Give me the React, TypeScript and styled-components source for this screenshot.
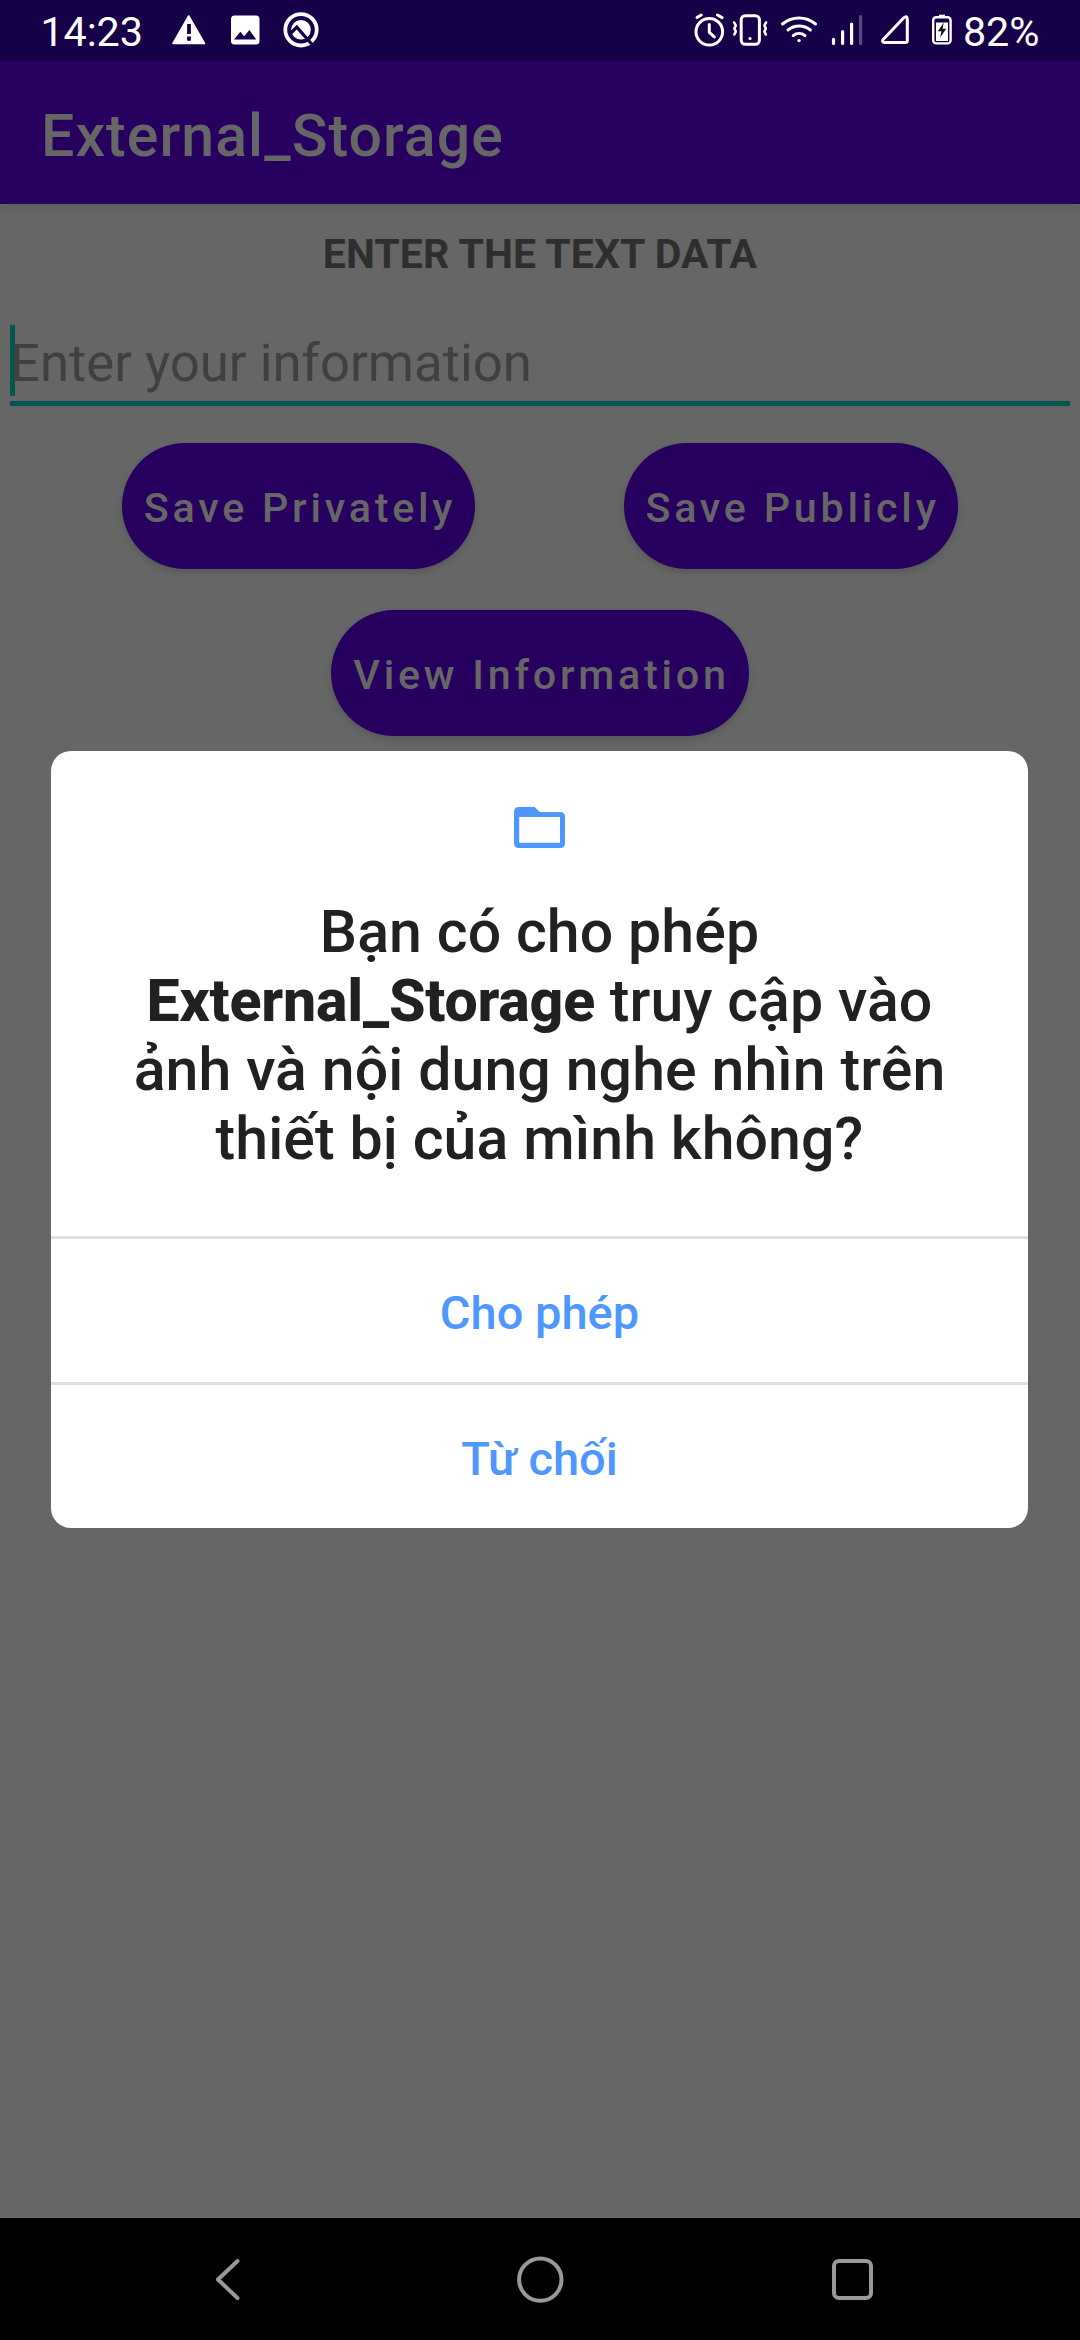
import React from "react";
import styled, { createGlobalStyle } from "styled-components";

const GlobalStyle = createGlobalStyle`
  *, *::before, *::after { box-sizing: border-box; }
  html, body { margin: 0; padding: 0; background: #666666; }
  body { font-family: Roboto, "Noto Sans", sans-serif; }
  button { font-family: inherit; border: 0; margin: 0; padding: 0; background: none; }
`;

const Screen = styled.div`
  position: relative;
  display: flex;
  flex-direction: column;
  width: 1080px;
  height: 2340px;
  overflow: hidden;
  background: #666666;
`;

const StatusBar = styled.header`
  flex: none;
  display: flex;
  justify-content: space-between;
  height: 61px;
  background: #160047;
  color: #ffffff;
`;

const StatusGroup = styled.div`
  display: flex;
  align-items: flex-start;
`;

const StatusText = styled.span<{ $width: number; $pad?: number }>`
  width: ${(p) => p.$width}px;
  padding-left: ${(p) => p.$pad ?? 0}px;
  font-size: 41.3px;
  line-height: 64px;
  letter-spacing: -0.1px;
  white-space: nowrap;
`;

const Glyph = styled.svg`
  display: block;
  flex: none;
  overflow: visible;
`;

const AppBar = styled.div`
  position: relative;
  flex: none;
  display: flex;
  align-items: center;
  height: 143px;
  padding: 6px 0 0 41px;
  background: #27005f;
  box-shadow: 0 2px 8px rgba(0, 0, 0, 0.12);
`;

const Title = styled.h1`
  margin: 0;
  font-size: 59px;
  font-weight: 500;
  line-height: 69px;
  letter-spacing: 1.05px;
  color: #666666;
`;

const Content = styled.main`
  flex: 1;
  display: flex;
  flex-direction: column;
  padding: 26px 10px 0;
`;

const Heading = styled.h2`
  margin: 0;
  text-align: center;
  font-size: 41px;
  font-weight: 700;
  line-height: 48px;
  letter-spacing: 0.08px;
  color: #2e2e2e;
`;

const Field = styled.div`
  display: flex;
  align-items: flex-start;
  height: 81px;
  margin-top: 47px;
  border-bottom: 5px solid #01574f;
`;

const Caret = styled.span`
  width: 5px;
  height: 71px;
  margin-right: -5px;
  background: #01574f;
`;

const Hint = styled.span`
  padding-top: 7px;
  font-size: 52.7px;
  line-height: 62px;
  color: #404040;
`;

const ButtonRow = styled.div<{ $top: number }>`
  display: flex;
  justify-content: center;
  gap: 149px;
  margin-top: ${(p) => p.$top}px;
`;

const PillButton = styled.button<{ $width: number }>`
  width: ${(p) => p.$width}px;
  height: 126px;
  padding: 4px 0 0 3px;
  border-radius: 63px;
  background: #27005f;
  color: #666666;
  font-size: 41.3px;
  font-weight: 500;
  letter-spacing: 3.75px;
  line-height: 48px;
  white-space: nowrap;
  box-shadow: 0 3px 7px rgba(0, 0, 0, 0.16);
`;

const Dialog = styled.section`
  position: absolute;
  top: 751px;
  left: 51px;
  width: 977px;
  height: 777px;
  display: flex;
  flex-direction: column;
  border-radius: 20px;
  background: #ffffff;
  overflow: hidden;
`;

const DialogBody = styled.div`
  display: flex;
  flex-direction: column;
  align-items: center;
  height: 485px;
  padding-top: 56px;
`;

const Question = styled.p`
  margin: 49px 0 0;
  text-align: center;
  font-size: 59px;
  font-weight: 500;
  line-height: 69px;
  letter-spacing: 0.1px;
  color: #212121;
`;

const AppName = styled.b`
  font-weight: 800;
  letter-spacing: -0.2px;
`;

const DialogAction = styled.button`
  height: 146px;
  padding-top: 5px;
  border-top: 3px solid #e0e0e0;
  color: #4d97ff;
  font-size: 47px;
  font-weight: 500;
  line-height: 56px;
`;

const NavBar = styled.nav`
  flex: none;
  display: flex;
  align-items: center;
  justify-content: space-between;
  height: 122px;
  padding: 0 204px;
  background: #000000;
`;

type IconProps = { x: number; w: number; children: React.ReactNode };

const StatusIcon = ({ x, w, children }: IconProps) => (
  <Glyph width={w} height={61} viewBox={`${x} 0 ${w} 61`} fill="none" stroke="#fff" strokeWidth={3} strokeLinecap="round" strokeLinejoin="round">
    {children}
  </Glyph>
);

const App = () => (
  <>
    <GlobalStyle />
    <Screen>
      <StatusBar>
        <StatusGroup>
          <StatusText $width={165} $pad={40.5}>14:23</StatusText>
          <StatusIcon x={165} w={55}>
            <path d="M188.7 16 204.5 43.5H173Z" fill="#fff" strokeWidth={1.6} />
            <path d="M189 24v10M189 36.5v4.3" stroke="#160047" strokeWidth={3.8} strokeLinecap="butt" />
          </StatusIcon>
          <StatusIcon x={220} w={50}>
            <rect x={231} y={15.5} width={28.5} height={29} rx={3.5} fill="#fff" stroke="none" />
            <path d="M234 39.6 240.3 31.8 244.2 36.3 249.4 30 256.3 39.6Z" fill="#160047" stroke="none" />
          </StatusIcon>
          <StatusIcon x={270} w={60}>
            <circle cx={301} cy={29.8} r={15.7} strokeWidth={3.8} />
            <circle cx={301} cy={29.8} r={9.8} fill="#fff" stroke="none" />
            <path d="M290.5 33.5 296.8 27.2 312.5 45" stroke="#160047" strokeWidth={3.2} strokeLinecap="butt" strokeLinejoin="miter" />
          </StatusIcon>
        </StatusGroup>
        <StatusGroup>
          <StatusIcon x={690} w={40}>
            <circle cx={709.3} cy={31.8} r={13.3} />
            <path d="M709.3 24.5v7.8l5 4.6M697 17.5l4.2-2.5M717.5 15l4.6 2.6" />
          </StatusIcon>
          <StatusIcon x={730} w={40}>
            <rect x={741.2} y={15.7} width={18.2} height={28.6} rx={4} />
            <circle cx={750} cy={38.5} r={1.6} fill="#fff" stroke="none" />
            <path d="M734.2 22.5l1.6 3-1.4 3 1.4 3-1.4 3 M766 22.5l-1.6 3 1.4 3-1.4 3 1.4 3" strokeWidth={2.6} />
          </StatusIcon>
          <StatusIcon x={770} w={55}>
            <path d="M782.5 24a25.5 25.5 0 0 1 33 0M788 30a17.5 17.5 0 0 1 22.4 0M793.2 35.6a9.6 9.6 0 0 1 11.8 0" />
            <circle cx={799} cy={40.6} r={1.7} fill="#fff" stroke="none" />
          </StatusIcon>
          <StatusIcon x={825} w={50}>
            <path d="M833.5 39.3v4.2M842.6 31.5v12M851.6 24v19.5" strokeWidth={3.2} />
            <path d="M860.6 16.5v27" stroke="#5a4a7c" strokeWidth={3.2} />
          </StatusIcon>
          <StatusIcon x={875} w={50}>
            <path d="M883.6 39 903.8 17.8Q907 15 907.3 19V40.5Q907.3 42.5 905.3 42.5H884.5Q881 42.2 883.6 39Z" />
          </StatusIcon>
          <StatusIcon x={925} w={37}>
            <rect x={933.2} y={17.2} width={17.4} height={26.2} rx={3} strokeWidth={2.4} />
            <path d="M939 16h6" strokeWidth={2.6} strokeLinecap="butt" />
            <rect x={936} y={22.5} width={12} height={18.5} fill="#fff" stroke="none" />
            <path d="M943.8 22.5 937.8 31.3h3.6l-1.2 6.3 6-8.8h-3.6Z" fill="#111" stroke="none" />
          </StatusIcon>
          <StatusText $width={118} $pad={1}>82%</StatusText>
        </StatusGroup>
      </StatusBar>
      <AppBar>
        <Title>External_Storage</Title>
      </AppBar>
      <Content>
        <Heading>ENTER THE TEXT DATA</Heading>
        <Field>
          <Caret />
          <Hint>Enter your information</Hint>
        </Field>
        <ButtonRow $top={37}>
          <PillButton $width={353}>Save Privately</PillButton>
          <PillButton $width={334}>Save Publicly</PillButton>
        </ButtonRow>
        <ButtonRow $top={41}>
          <PillButton $width={418}>View Information</PillButton>
        </ButtonRow>
      </Content>
      <NavBar>
        <Glyph width={48} height={48} viewBox="0 0 48 48" fill="none" stroke="#999" strokeWidth={4} strokeLinecap="round" strokeLinejoin="round">
          <path d="M33.5 6 14 24.5 33.5 43" />
        </Glyph>
        <Glyph width={48} height={48} viewBox="0 0 48 48" fill="none" stroke="#999" strokeWidth={4}>
          <circle cx={24.3} cy={24.6} r={21.2} />
        </Glyph>
        <Glyph width={48} height={48} viewBox="0 0 48 48" fill="none" stroke="#999" strokeWidth={4}>
          <rect x={6} y={6} width={37} height={37} rx={5} />
        </Glyph>
      </NavBar>
      <Dialog>
        <DialogBody>
          <Glyph width={51} height={41} viewBox="0 0 51 41">
            <path fillRule="evenodd" fill="#4d97ff" d="M5 0H20.5L25.8 5H46Q51 5 51 10V36Q51 41 46 41H5Q0 41 0 36V5Q0 0 5 0ZM5.2 10V35.8H46V10Z" />
          </Glyph>
          <Question>
            Bạn có cho phép<br />
            <AppName>External_Storage</AppName> truy cập vào<br />
            ảnh và nội dung nghe nhìn trên<br />
            thiết bị của mình không?
          </Question>
        </DialogBody>
        <DialogAction>Cho phép</DialogAction>
        <DialogAction>Từ chối</DialogAction>
      </Dialog>
    </Screen>
  </>
);

export default App;
